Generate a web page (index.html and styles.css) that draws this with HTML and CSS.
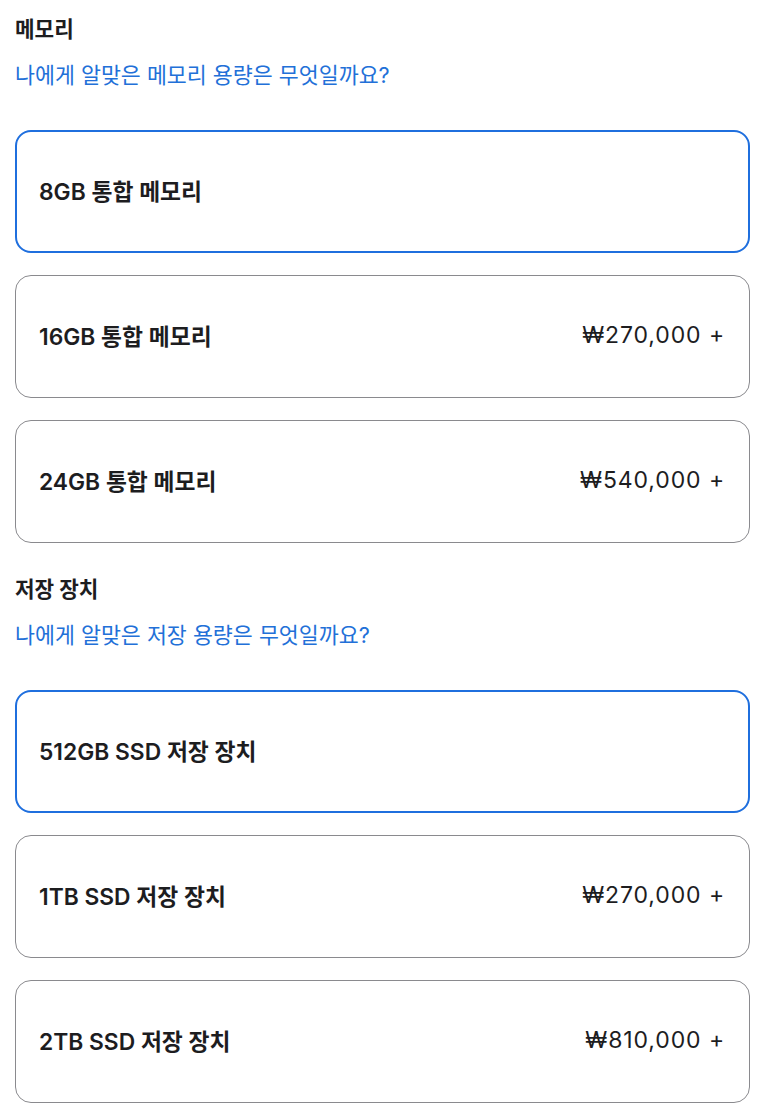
FILE: index.html
```html
<!DOCTYPE html>
<html lang="ko">
<head>
<meta charset="utf-8">
<link rel="stylesheet" href="styles.css">
</head>
<body>
<main class="page">
  <section class="group">
    <h2 class="group-title">메모리</h2>
    <a class="help-link" href="#">나에게 알맞은 메모리 용량은 무엇일까요?</a>
    <div class="options">
      <div class="option selected"><span class="name">8GB 통합 메모리</span></div>
      <div class="option"><span class="name">16GB 통합 메모리</span><span class="price">₩270,000 +</span></div>
      <div class="option"><span class="name">24GB 통합 메모리</span><span class="price">₩540,000 +</span></div>
    </div>
  </section>
  <section class="group">
    <h2 class="group-title">저장 장치</h2>
    <a class="help-link" href="#">나에게 알맞은 저장 용량은 무엇일까요?</a>
    <div class="options">
      <div class="option selected"><span class="name">512GB SSD 저장 장치</span></div>
      <div class="option"><span class="name">1TB SSD 저장 장치</span><span class="price">₩270,000 +</span></div>
      <div class="option"><span class="name">2TB SSD 저장 장치</span><span class="price">₩810,000 +</span></div>
    </div>
  </section>
</main>
</body>
</html>
```
FILE: styles.css
```css
html, body {
  margin: 0;
  padding: 0;
  background: #ffffff;
}
body {
  font-family: "Inter", "Noto Sans CJK KR", sans-serif;
  color: #1d1d1f;
}
.page {
  padding: 14px 16px 0 15px;
  display: flex;
  flex-direction: column;
  gap: 31px;
}
.group {
  display: flex;
  flex-direction: column;
}
.group-title {
  margin: 0;
  font-size: 21.3px;
  line-height: 30px;
  font-weight: 700;
  color: #1d1d1f;
}
.help-link {
  margin-top: 16px;
  font-size: 21.7px;
  line-height: 30px;
  color: #2270d8;
  text-decoration: none;
}
.options {
  margin-top: 40px;
  display: flex;
  flex-direction: column;
  gap: 22px;
}
.option {
  box-sizing: border-box;
  height: 123px;
  border: 1px solid #8a8a8e;
  border-radius: 16px;
  padding: 0 24px 3px 23px;
  display: flex;
  align-items: center;
  justify-content: space-between;
}
.option.selected {
  border: 2px solid #1f6fde;
  padding: 0 23px 3px 22px;
}
.name {
  font-size: 22.8px;
  font-weight: 600;
  color: #1d1d1f;
}
.price {
  font-size: 23px;
  font-weight: 400;
  letter-spacing: 0.9px;
  color: #1d1d1f;
}
```
